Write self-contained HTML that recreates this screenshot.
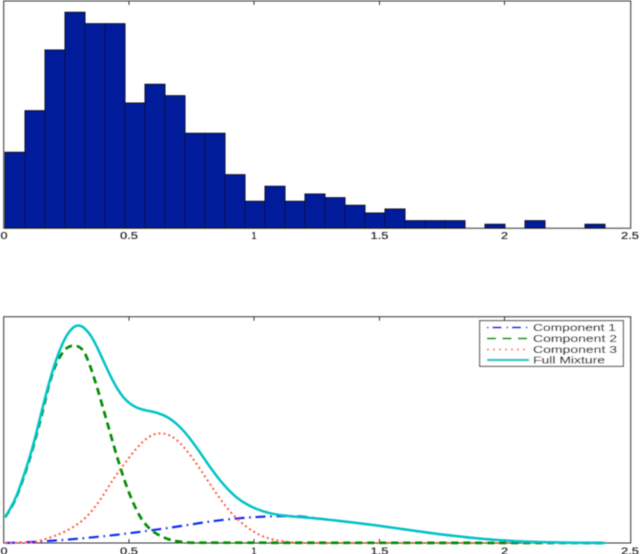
<!DOCTYPE html>
<html>
<head>
<meta charset="utf-8">
<style>
html,body{margin:0;padding:0;background:#fff}
svg{display:block}
text{font-family:"Liberation Sans",sans-serif;fill:#111;stroke:#111;stroke-width:.12px}
</style>
</head>
<body>
<svg width="640" height="554" viewBox="0 0 640 554" xmlns="http://www.w3.org/2000/svg">
<defs><filter id="b" x="-2%" y="-2%" width="104%" height="104%"><feGaussianBlur stdDeviation="0.4"/></filter></defs>
<g filter="url(#b)">
<!-- top axes -->
<path d="M3.7 228.2V1H630.7V228.2Z M129 1v4 M254 1v4 M379.500 1v4 M504.500 1v4" fill="none" stroke="#333" stroke-width="1"/>
<g fill="#021a9b" stroke="#0a0a0a" stroke-width="1">
<rect x="5" y="152.300" width="20" height="75.700"/>
<rect x="25" y="110.700" width="20" height="117.300"/>
<rect x="45" y="50" width="20" height="178"/>
<rect x="65" y="12.300" width="20" height="215.700"/>
<rect x="85" y="23.700" width="20" height="204.300"/>
<rect x="105" y="23.700" width="20" height="204.300"/>
<rect x="125" y="103" width="20" height="125"/>
<rect x="145" y="84.300" width="20" height="143.700"/>
<rect x="165" y="95.700" width="20" height="132.300"/>
<rect x="185" y="133.300" width="20" height="94.700"/>
<rect x="205" y="133.300" width="20" height="94.700"/>
<rect x="225" y="174.700" width="20" height="53.300"/>
<rect x="245" y="201.300" width="20" height="26.700"/>
<rect x="265" y="186.300" width="20" height="41.700"/>
<rect x="285" y="201.300" width="20" height="26.700"/>
<rect x="305" y="194" width="20" height="34"/>
<rect x="325" y="197.700" width="20" height="30.300"/>
<rect x="345" y="205.300" width="20" height="22.700"/>
<rect x="365" y="213" width="20" height="15"/>
<rect x="385" y="209" width="20" height="19"/>
<rect x="405" y="220.700" width="20" height="7.300"/>
<rect x="425" y="220.700" width="20" height="7.300"/>
<rect x="445" y="220.700" width="20" height="7.300"/>
<rect x="485" y="224.300" width="20" height="3.700"/>
<rect x="525" y="220.700" width="20" height="7.300"/>
<rect x="585" y="224.300" width="20" height="3.700"/>
</g>
<g font-size="10" text-anchor="middle">
<text x="4" y="239" textLength="7" lengthAdjust="spacingAndGlyphs">0</text>
<text x="129" y="239" textLength="18" lengthAdjust="spacingAndGlyphs">0.5</text>
<text x="254" y="239" textLength="5" lengthAdjust="spacingAndGlyphs">1</text>
<text x="379.500" y="239" textLength="18" lengthAdjust="spacingAndGlyphs">1.5</text>
<text x="504.500" y="239" textLength="7" lengthAdjust="spacingAndGlyphs">2</text>
<text x="630" y="239" textLength="18" lengthAdjust="spacingAndGlyphs">2.5</text>
<text x="4" y="554.500" textLength="7" lengthAdjust="spacingAndGlyphs">0</text>
<text x="129" y="554.500" textLength="18" lengthAdjust="spacingAndGlyphs">0.5</text>
<text x="254" y="554.500" textLength="5" lengthAdjust="spacingAndGlyphs">1</text>
<text x="379.500" y="554.500" textLength="18" lengthAdjust="spacingAndGlyphs">1.5</text>
<text x="504.500" y="554.500" textLength="7" lengthAdjust="spacingAndGlyphs">2</text>
<text x="630" y="554.500" textLength="18" lengthAdjust="spacingAndGlyphs">2.5</text>
</g>
<!-- bottom axes -->
<path d="M3.7 543V316.700H630.700V543Z M129 316.700v4 M254 316.700v4 M379.500 316.700v4 M504.500 316.700v4 M129 543v-4 M254 543v-4 M379.500 543v-4 M504.500 543v-4" fill="none" stroke="#333" stroke-width="1"/>
<g transform="translate(0 304) scale(0.33333)" fill="none" stroke-linejoin="round">
<path stroke="#0a2cf0" stroke-width="6.500" stroke-dasharray="30 14 5 14" d="M15 717C200 712 400 690 600 657C700 642 800 634 900 637Q930 640 960 644Q1140 665 1230 678.500Q1320 692 1410 701Q1500 710 1580 713Q1660 716 1815 717"/>
<path stroke="#ff5a40" stroke-width="6" stroke-dasharray="6 9" d="M15 717L100 715Q140 705 160 697Q180 690 200 680Q220 670 240 655Q260 640 280 615Q300 590 320 557Q340 525 360 497Q380 470 400 445Q420 420 435 408Q457 388 480 388Q505 388 525 404Q540 415 560 440Q580 465 600 495Q620 525 640 555Q660 585 680 610Q700 635 720 652Q740 670 760 682Q780 695 800 701Q820 708 850 712Q880 716 920 717L1815 717"/>
<path stroke="#008c00" stroke-width="8" stroke-dasharray="22 14" d="M15 640Q40 605 55 565Q70 525 85 478Q100 430 115 372Q130 315 140 272Q150 230 160 202Q170 172 185 150Q200 125 222 125Q245 125 258 155Q270 183 280 215Q290 245 300 280Q310 315 320 350Q330 385 340 420Q350 455 360 487Q370 520 380 547Q390 575 400 597Q410 620 420 637Q430 655 445 670Q460 685 480 695Q500 705 520 710Q540 714 570 716L1815 717"/>
<path stroke="#00c2c4" stroke-width="7.500" d="M15 640Q42 598 56 559Q70 520 85 472.500Q100 425 115 362.500Q130 300 145 245Q160 190 175 150Q190 110 202.500 91Q215 72 225 67Q235 62 245 67Q255 72 267.500 88.500Q280 105 295 137.500Q310 170 325 202.500Q340 235 355 258.500Q370 282 385 294.500Q400 307 415 312.500Q430 318 450 321.500Q470 325 490 333.500Q510 342 530 360Q550 378 570 404Q590 430 610 460Q630 490 650 516Q670 542 690 562Q710 582 730 594.500Q750 607 770 615Q790 623 810 627.500Q830 632 855 635Q880 638 920 641Q960 644 1050 654.500Q1140 665 1230 678.500Q1320 692 1410 701Q1500 710 1580 713Q1660 716 1815 717"/>
</g>
<!-- legend -->
<rect x="479.700" y="320.700" width="143.600" height="45.600" fill="#fff" stroke="#333" stroke-width="1"/>
<path d="M487 327.500H529" stroke="#0a2cf0" stroke-width="2" stroke-dasharray="1.500 4 9 5 1.500 4 9 5" fill="none"/>
<path d="M487 338.500H529" stroke="#00a000" stroke-width="2" stroke-dasharray="9 6.500" fill="none"/>
<path d="M487 349.500H529" stroke="#ff5a40" stroke-width="1.800" stroke-dasharray="1.800 4.200" fill="none"/>
<path d="M487 360H529" stroke="#00c2c4" stroke-width="2.200" fill="none"/>
<g font-size="10.500">
<text x="533" y="331" textLength="83" lengthAdjust="spacingAndGlyphs">Component 1</text>
<text x="533" y="342" textLength="84" lengthAdjust="spacingAndGlyphs">Component 2</text>
<text x="533" y="353" textLength="84" lengthAdjust="spacingAndGlyphs">Component 3</text>
<text x="533" y="363.500" textLength="72" lengthAdjust="spacingAndGlyphs">Full Mixture</text>
</g>
</g>
</svg>
</body>
</html>
